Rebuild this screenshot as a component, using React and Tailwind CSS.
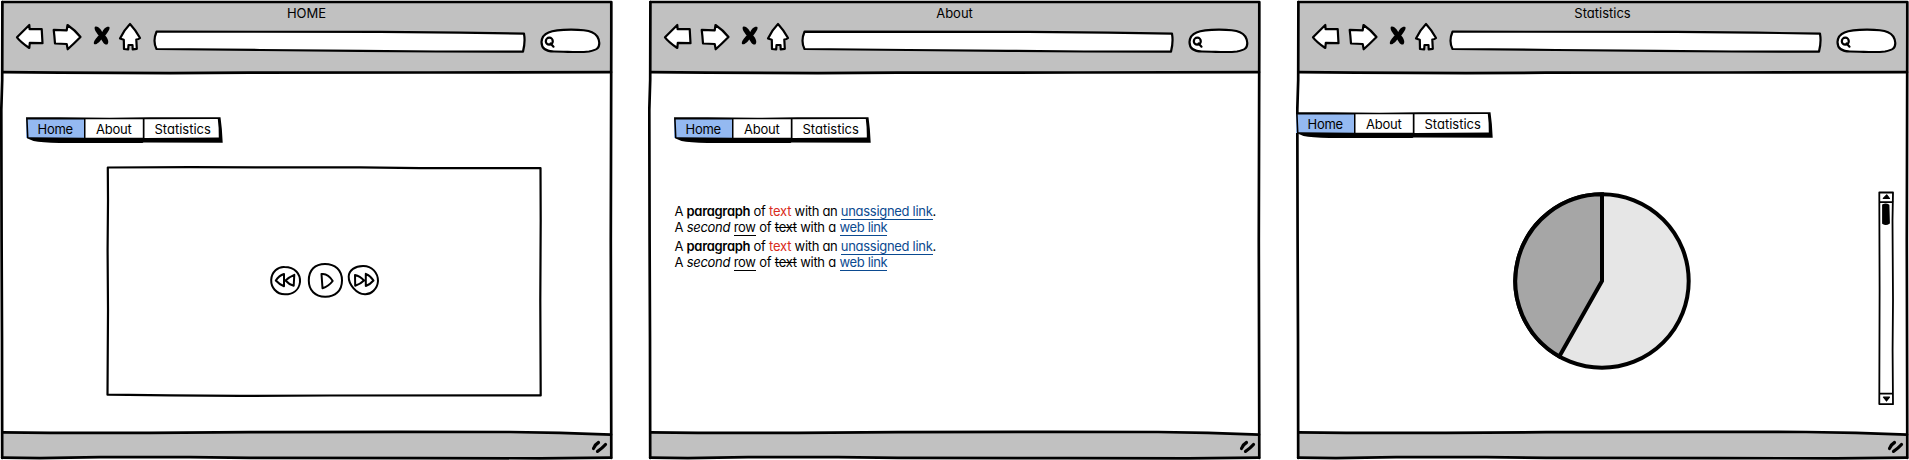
import React from "react";

const ink = {
  fill: "none",
  stroke: "#000",
  strokeWidth: 2.2,
  strokeLinecap: "round",
  strokeLinejoin: "round",
};

function Toolbar() {
  return (
    <div className="flex h-9 pl-[14px]">
      <svg className="h-9 w-8 shrink-0" viewBox="14 20 32 36" {...ink}>
        <path fill="#fff" d="M17 37.3 L29.3 25 L29.6 29.2 L41.7 29 L42.5 43.2 L29.8 42.8 L29.3 48 C25 45 20.500 42 17 37.300Z" />
      </svg>
      <svg className="ml-[5px] h-9 w-8 shrink-0" viewBox="51 20 32 36" {...ink}>
        <path fill="#fff" d="M53.700 29.800 Q60 30 66.700 30.300 L67.500 25 Q75 30 80.500 37 Q74 43.500 67.700 49.300 L66.700 44 L55 43.500 Q54.500 36 53.700 29.800Z" />
      </svg>
      <svg className="ml-[9px] h-9 w-[20px] shrink-0" viewBox="92 20 20 36" {...ink} stroke="none" fill="#000">
        <path d="M95 26.700 C98 25.500 101 29.500 102.300 32 C103.500 29 106.500 26 109.300 27 C110.600 28.500 107.500 33 105.200 35.400 C107.500 38 109.500 41.500 107.500 44.300 C104.500 45.500 102.500 41.500 101.300 39.500 C99.500 42 96 45.500 94 44 C93 41.500 96.500 37.500 98.700 35.400 C96.500 33 93.500 28.500 95 26.700Z" />
      </svg>
      <svg className="ml-[5px] h-9 w-[26px] shrink-0" viewBox="117 20 26 36" {...ink}>
        <path fill="#fff" d="M130 24 Q136 30.500 140 38 Q138.500 39.500 136.300 39.500 L136.800 48.800 L132.700 49.300 L132.500 45 L128.500 45 L128.200 49.500 L124 49 L123.800 39.700 L120 38.500 Q124 30 130 24Z" />
      </svg>
      <svg className="ml-[9px] h-9 w-[376px] shrink-0" viewBox="152 20 376 36" {...ink}>
        <path fill="#fff" d="M156.500 31.700 L380 31.800 L460 32.600 L524 33.700 Q525.500 42 523 51.600 L436 51.500 L360 50.800 L260 50 L156.500 49 Q152.500 41 156.500 31.700Z" />
      </svg>
      <svg className="ml-[10px] h-9 w-[64px] shrink-0" viewBox="538 20 64 36" {...ink}>
        <path fill="#fff" d="M541.500 42 C542 32.500 550 30 571 29.700 C590 29.700 598.500 32 599.300 43 C599.300 48.500 596.500 50 589 51.500 C578 52.800 568 51.500 554 51.500 C547 51.500 541.500 49 541.500 42Z" />
        <circle cx="549.300" cy="41.200" r="3.500" />
        <path d="M550.500 43.500 L553.500 46.700" />
      </svg>
    </div>
  );
}

function Frame() {
  return (
    <svg className="pointer-events-none absolute inset-0 h-full w-full" viewBox="0 0 613 460" {...ink} strokeWidth="2.700">
      <path d="M2.400 2 L611.300 2 L611.300 30 L610.800 240 L611.300 458" />
      <path d="M2.400 2 L2.200 80 L1.300 110 L1.600 240 L2 340 L2.200 458" />
      <path d="M2.500 72.200 L60 72.600 L170 73.100 L250 72.700 L430 72.500 L611 72.200" />
      <path d="M2.500 432.300 L50 432.900 L150 432.800 L250 432.200 L400 431.800 L510 432 L560 432.900 L611 434.600" />
      <path d="M2.200 457.700 L40 458.200 L100 457.200 L190 457.200 L250 457.900 L420 458.200 L540 458.300 L611 457.600" />
    </svg>
  );
}

function Browser({ title, children }) {
  return (
    <section className="relative flex h-[460px] w-[613px] shrink-0 flex-col">
      <header className="mx-0.5 mt-0.5 h-[70px] shrink-0 bg-[#c1c1c1]">
        <h1 className="h-[18px] pt-[2px] text-center text-[13px] leading-[18px]">{title}</h1>
        <div className="-ml-0.5">
          <Toolbar />
        </div>
      </header>
      <main className="flex h-[359px] flex-col">{children}</main>
      <footer className="mx-0.5 flex h-[27px] justify-end">
        <svg className="h-[27px] w-full" viewBox="2 431 609 27">
          <path fill="#c1c1c1" d="M2 432.300 L150 432.800 L400 431.800 L510 432 L611 434.600 V458 H2Z" />
          <path d="M593.500 448.500 Q595 444.500 598.500 442.500 M597.500 451.300 Q602 448.500 605.500 444.500" fill="none" stroke="#000" strokeWidth="3.200" strokeLinecap="round" />
        </svg>
      </footer>
      <Frame />
    </section>
  );
}

function Nav({ className }) {
  return (
    <nav className={"relative z-10 flex h-[26px] w-[197px] shrink-0 text-[13px] leading-[21px] " + className}>
      <span className="mt-[2px] h-[19px] w-[58px] bg-[#94b9f1] pl-[11.5px] tracking-[-0.25px]">Home</span>
      <span className="mt-[2px] h-[19px] w-[58.500px] bg-white pl-[12px] tracking-[-0.25px]">About</span>
      <span className="mt-[2px] h-[19px] w-[77px] bg-white pl-[12px]">Statistics</span>
      <svg className="absolute inset-0 h-[26px] w-[197px]" viewBox="26.500 117 197 26">
        <path d="M26.500 117.300 L60 117.200 L110 117.800 L150 117.300 L221 117.300 Q222.700 129 223.200 142.800 L144 142.500 L143 143 L60 143 Q42 142.500 34 141 L27.500 138.300Z M28.200 119.500 L29 137.300 L84.500 137.700 V119.600Z M86 119.300 V137.800 L143.300 137.700 V119.200Z M145 119.200 V138 L219.300 137.500 Q219.500 128 218.300 119Z" fillRule="evenodd" />
      </svg>
    </nav>
  );
}

function Player() {
  return (
    <div className="ml-[106px] mt-[23px] flex h-[232px] w-[436px] items-center justify-center">
      <svg className="h-[232px] w-[436px]" viewBox="106 166 436 232" {...ink}>
        <path d="M107.800 167.500 L190 167.200 L360 167.400 L420 168.100 L540.500 168.100 L540.700 220 L540.300 300 L540.700 395.400 L330 395.500 L240 395.900 L170 395.300 L107.500 394.700 L108 310 L107.600 250 L108 200Z" />
        <g strokeWidth="2">
          <path d="M284.500 267 C295 267 300.500 274 300 282 C299 290 293 294.300 285 294.300 C276 294.300 271 287 271.200 280 C271.500 272 278 266.500 284.500 267Z" />
          <path d="M284 274 Q279 275.500 275.800 280.500 Q279.500 284.500 284 286.200Z M294.300 274.800 Q289 277 285.500 280.500 Q289 284.500 293.700 285.800Z" />
          <path d="M325 264 C335 264 342 270 342 280.500 C342 291 335 296.800 325.500 296.800 C315 297 308.800 290 308.800 280.500 C308.800 270 315 264 325 264Z" />
          <path d="M321.500 274 Q328 273 332.700 281 Q328.500 286.500 322.500 288.300 Q322 281 321.500 274Z" />
          <path d="M363 266 C372 265.800 378 273 378 281 C377.500 289 371 294.500 365 294.300 C356 294 348.500 284 348.700 276.500 C349 270 355 266.200 363 266Z" />
          <path d="M355 275 Q360 276 364 280.500 Q360.500 284 355.200 285.800Z M365.800 273.800 Q371 276 373.500 280.500 Q370 284.500 365.800 286Z" />
        </g>
      </svg>
    </div>
  );
}

function Paragraph() {
  return (
    <div className="mb-[3px]">
      <p>
        A <b className="font-semibold tracking-[-0.3px]">paragraph</b> of <span className="tracking-[-0.2px] text-[#d92b20]">text</span> with an{" "}
        <a className="border-b border-[#0b4a90] text-[#0b4a90]">unassigned link</a>.
      </p>
      <p className="[word-spacing:0.2px]">
        A <i>second</i> <span className="border-b border-black">row</span> of <s>text</s> with a{" "}
        <a className="border-b border-[#0b4a90] tracking-[-0.4px] text-[#0b4a90]">web link</a>
      </p>
    </div>
  );
}

function Pie() {
  return (
    <svg className="ml-[217px] h-[180px] w-[180px]" viewBox="217 191 180 180" fill="none" stroke="#000" strokeWidth="4">
      <circle cx="306" cy="281" r="86.700" fill="#e6e6e6" />
      <path fill="#a6a6a6" d="M306 281 V194.300 A86.700 86.700 0 0 0 263.300 356.450Z" />
    </svg>
  );
}

function Scrollbar() {
  return (
    <svg className="-mt-px ml-[184px] h-[216px] w-[18px]" viewBox="581 190 18 216" {...ink} strokeWidth="1.800">
      <path d="M583.300 192.300 L597 192.500 L596.500 220 L597 300 L596.600 350 L597 404.200 L583.300 404 L583.600 290Z M583.300 202.200 L597 201.800 M583.300 393.700 L597 393.300" />
      <path d="M587.300 198.500 L590.700 194.900 L593.500 198.500Z M587.500 397.200 L593.500 397.200 L590.500 401Z" fill="#000" strokeWidth="1.200" />
      <path d="M587 205 Q590 203.800 592.500 205.300 L593 223 Q590 225 587 223.300Z" fill="#000" />
    </svg>
  );
}

export default function App() {
  return (
    <div className="flex h-[460px] w-[1909px] gap-[35px] overflow-hidden bg-white font-['Inter','Lato',sans-serif] text-black [font-feature-settings:'cv11','ss03']">
      <Browser title="HOME">
        <Nav className="ml-[26px] mt-[45px]" />
        <Player />
      </Browser>
      <Browser title="About">
        <Nav className="ml-[26px] mt-[45px]" />
        <div className="ml-[26.500px] mt-[60px] text-[13px] leading-4 tracking-[-0.300px]">
          <Paragraph />
          <Paragraph />
        </div>
      </Browser>
      <Browser title="Statistics">
        <Nav className="mt-[40px]" />
        <div className="mt-[53px] flex">
          <Pie />
          <Scrollbar />
        </div>
      </Browser>
    </div>
  );
}
